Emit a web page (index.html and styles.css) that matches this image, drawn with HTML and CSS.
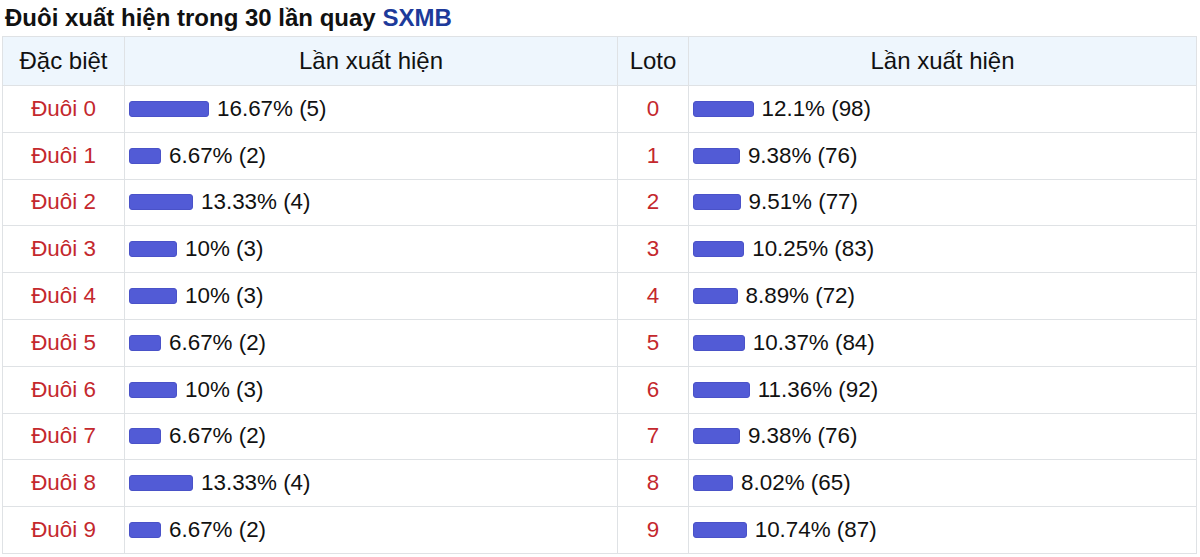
FILE: index.html
```html
<!DOCTYPE html>
<html lang="vi">
<head>
<meta charset="utf-8">
<title>Đuôi xuất hiện trong 30 lần quay SXMB</title>
<link rel="stylesheet" href="styles.css">
</head>
<body>
<h2 class="title">Đuôi xuất hiện trong 30 lần quay <span class="brand">SXMB</span></h2>
<table class="stats">
  <colgroup>
    <col class="c1"><col class="c2"><col class="c3"><col class="c4">
  </colgroup>
  <thead>
    <tr><th>Đặc biệt</th><th>Lần xuất hiện</th><th>Loto</th><th>Lần xuất hiện</th></tr>
  </thead>
  <tbody>
    <tr><td class="label">Đuôi 0</td><td><div class="cell"><span class="bar" style="width:80px"></span>16.67% (5)</div></td><td class="label">0</td><td><div class="cell"><span class="bar" style="width:60.5px"></span>12.1% (98)</div></td></tr>
    <tr><td class="label">Đuôi 1</td><td><div class="cell"><span class="bar" style="width:32px"></span>6.67% (2)</div></td><td class="label">1</td><td><div class="cell"><span class="bar" style="width:46.9px"></span>9.38% (76)</div></td></tr>
    <tr><td class="label">Đuôi 2</td><td><div class="cell"><span class="bar" style="width:64px"></span>13.33% (4)</div></td><td class="label">2</td><td><div class="cell"><span class="bar" style="width:47.5px"></span>9.51% (77)</div></td></tr>
    <tr><td class="label">Đuôi 3</td><td><div class="cell"><span class="bar" style="width:48px"></span>10% (3)</div></td><td class="label">3</td><td><div class="cell"><span class="bar" style="width:51.2px"></span>10.25% (83)</div></td></tr>
    <tr><td class="label">Đuôi 4</td><td><div class="cell"><span class="bar" style="width:48px"></span>10% (3)</div></td><td class="label">4</td><td><div class="cell"><span class="bar" style="width:44.5px"></span>8.89% (72)</div></td></tr>
    <tr><td class="label">Đuôi 5</td><td><div class="cell"><span class="bar" style="width:32px"></span>6.67% (2)</div></td><td class="label">5</td><td><div class="cell"><span class="bar" style="width:51.8px"></span>10.37% (84)</div></td></tr>
    <tr><td class="label">Đuôi 6</td><td><div class="cell"><span class="bar" style="width:48px"></span>10% (3)</div></td><td class="label">6</td><td><div class="cell"><span class="bar" style="width:56.8px"></span>11.36% (92)</div></td></tr>
    <tr><td class="label">Đuôi 7</td><td><div class="cell"><span class="bar" style="width:32px"></span>6.67% (2)</div></td><td class="label">7</td><td><div class="cell"><span class="bar" style="width:46.9px"></span>9.38% (76)</div></td></tr>
    <tr><td class="label">Đuôi 8</td><td><div class="cell"><span class="bar" style="width:64px"></span>13.33% (4)</div></td><td class="label">8</td><td><div class="cell"><span class="bar" style="width:40.1px"></span>8.02% (65)</div></td></tr>
    <tr><td class="label">Đuôi 9</td><td><div class="cell"><span class="bar" style="width:32px"></span>6.67% (2)</div></td><td class="label">9</td><td><div class="cell"><span class="bar" style="width:53.7px"></span>10.74% (87)</div></td></tr>
  </tbody>
</table>
</body>
</html>
```

FILE: styles.css
```css
html, body {
  margin: 0;
  padding: 0;
  background: #ffffff;
}

body {
  padding: 0 2px;
  font-family: "Liberation Sans", Arial, sans-serif;
  color: #111111;
}

.title {
  margin: 0;
  padding-left: 3px;
  height: 36px;
  line-height: 36px;
  font-size: 24px;
  font-weight: bold;
  color: #111111;
  white-space: nowrap;
}

.brand {
  color: #1d3a9a;
}

.stats {
  border-collapse: collapse;
  table-layout: fixed;
  width: 1194px;
}

.c1 { width: 122px; }
.c2 { width: 493px; }
.c3 { width: 71px; }
.c4 { width: 508px; }

.stats th,
.stats td {
  border: 1px solid #dfe2e5;
  padding: 0;
}

.stats th {
  height: 48px;
  background: #eef6fd;
  font-weight: normal;
  font-size: 24px;
  color: #111111;
  text-align: center;
}

.stats td {
  height: 45.8px;
  font-size: 22.4px;
}

.stats td.label {
  text-align: center;
  color: #c4282d;
}

.cell {
  display: flex;
  align-items: center;
  padding-left: 4px;
  white-space: nowrap;
  color: #111111;
}

.bar {
  display: inline-block;
  height: 16px;
  margin-right: 8px;
  background: #525bd6;
  border-radius: 3px;
  box-sizing: border-box;
  border: 1px solid #4a52c8;
}
```
